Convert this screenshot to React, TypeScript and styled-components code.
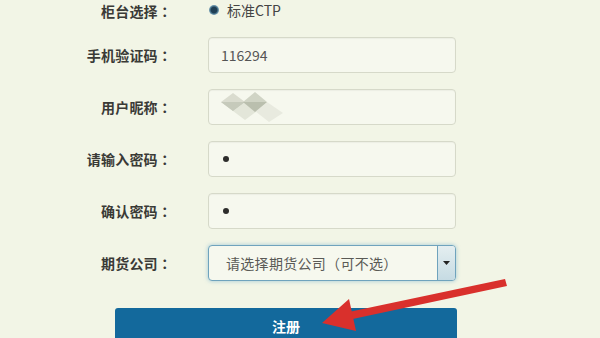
import React from 'react';
import styled, { createGlobalStyle } from 'styled-components';

const GlobalStyle = createGlobalStyle`
  html, body {
    margin: 0;
    padding: 0;
    background: #f2f5e6;
    font-family: "Noto Sans CJK SC", "Liberation Sans", sans-serif;
  }
`;

const Page = styled.div`
  position: relative;
  width: 600px;
  height: 338px;
  overflow: hidden;
  background: #f2f5e6;
`;

const Form = styled.div`
  display: grid;
  grid-template-columns: 172px 248px;
  column-gap: 36px;
  row-gap: 16px;
  align-items: center;
`;

const Label = styled.div`
  text-align: right;
  font-size: 14px;
  font-weight: 700;
  color: #3a3a36;
  letter-spacing: 0.2px;
  white-space: nowrap;
`;

const Colon = styled.span`
  font-family: "Noto Sans CJK TC", sans-serif;
`;

const RadioRow = styled.div`
  display: flex;
  align-items: center;
  gap: 8px;
  height: 20px;
  font-size: 14px;
  color: #444;
  margin-bottom: 1px;
`;

const Radio = styled.span`
  width: 10px;
  height: 10px;
  margin-left: 1px;
  border-radius: 50%;
  background: radial-gradient(circle, #1f3f55 0 40%, #5d8aa3 60%, #c3d4da 100%);
`;

const Field = styled.div<{ $focus?: boolean }>`
  position: relative;
  height: 36px;
  box-sizing: border-box;
  border: 1px solid ${(p) => (p.$focus ? '#6fa3bd' : '#d6d9c9')};
  border-radius: 4px;
  background: #f6f8ee;
  display: flex;
  align-items: center;
  padding-left: 12px;
  font-size: 14px;
  color: #555;
  box-shadow: ${(p) => (p.$focus ? '0 0 4px rgba(90, 160, 200, 0.55)' : 'inset 0 1px 1px rgba(0,0,0,0.04)')};
  overflow: hidden;
`;

const Dot = styled.span`
  width: 6px;
  height: 6px;
  border-radius: 50%;
  background: #2d2d2b;
  margin-left: 2px;
`;

const SelectText = styled.span`
  flex: 1;
  padding-left: 5px;
  color: #5a5a56;
  font-size: 14px;
  letter-spacing: 0.3px;
`;

const SelectButton = styled.span`
  width: 17px;
  align-self: stretch;
  border-left: 1px solid #6fa3bd;
  background: linear-gradient(#e4eef0, #c6dbe3);
  display: flex;
  align-items: center;
  justify-content: center;
`;

const ButtonRow = styled.div`
  padding-left: 115px;
  margin-top: 27px;
`;

const Submit = styled.div`
  width: 342px;
  height: 40px;
  border-radius: 3px 3px 0 0;
  background: #13699c;
  color: #fff;
  font-size: 14px;
  line-height: 18px;
  font-weight: 700;
  display: flex;
  justify-content: center;
  padding-top: 9px;
  box-sizing: border-box;
`;

const Overlay = styled.svg`
  position: absolute;
  left: 0;
  top: 0;
  pointer-events: none;
`;

const Mosaic = () => (
  <svg width="90" height="36" viewBox="0 0 90 36" style={{ marginLeft: -8 }}>
    <polygon points="8,13 20,4 32,13 20,22" fill="#dadccf" />
    <polygon points="30,13 42,3 54,13 42,23" fill="#d0d4c5" />
    <polygon points="20,22 32,13 44,22 32,31" fill="#e3e6d9" />
    <polygon points="42,22 54,13 70,24 56,33" fill="#e8eadf" />
    <polygon points="8,13 32,13 20,22" fill="#c6cabb" />
    <polygon points="30,13 54,13 42,23" fill="#babfae" />
  </svg>
);

const rows: { label: string; field: React.ReactNode }[] = [
  { label: '手机验证码', field: <Field>116294</Field> },
  { label: '用户昵称', field: <Field><Mosaic /></Field> },
  { label: '请输入密码', field: <Field><Dot /></Field> },
  { label: '确认密码', field: <Field><Dot /></Field> },
];

export default function App() {
  return (
    <Page>
      <GlobalStyle />
      <Form>
        <Label>柜台选择<Colon>：</Colon></Label>
        <RadioRow>
          <Radio />
          <span>标准CTP</span>
        </RadioRow>

        {rows.map((r) => (
          <React.Fragment key={r.label}>
            <Label>{r.label}<Colon>：</Colon></Label>
            {r.field}
          </React.Fragment>
        ))}

        <Label>期货公司<Colon>：</Colon></Label>
        <Field $focus>
          <SelectText>请选择期货公司（可不选）</SelectText>
          <SelectButton>
            <svg width="7" height="4" viewBox="0 0 7 4">
              <polygon points="0,0 7,0 3.5,4" fill="#222" />
            </svg>
          </SelectButton>
        </Field>
      </Form>
      <ButtonRow>
        <Submit>注册</Submit>
      </ButtonRow>
      <Overlay width="600" height="338" viewBox="0 0 600 338">
        <polygon points="505,279 507,286 348,320 344,313" fill="#d9302c" />
        <polygon points="322,323 349,299 356,331" fill="#d9302c" />
      </Overlay>
    </Page>
  );
}
